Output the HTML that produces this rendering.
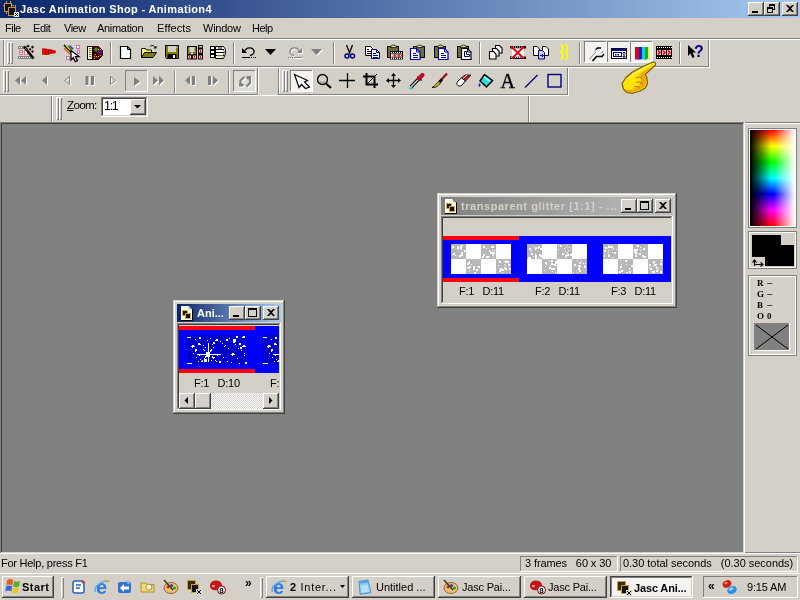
<!DOCTYPE html>
<html lang="en"><head><meta charset="utf-8"><title>Jasc Animation Shop - Animation4</title>
<style>
html,body{margin:0;padding:0}
body{width:800px;height:600px;position:relative;overflow:hidden;background:#d4d0c8;font-family:"Liberation Sans",sans-serif;font-size:11px;color:#000}
div,span,svg{position:absolute;box-sizing:border-box}
svg{overflow:visible;will-change:transform}
.t{white-space:pre;line-height:13px;height:13px;will-change:transform}
.b{font-weight:bold}
.raised{background:#d4d0c8;box-shadow:inset -1px -1px #404040,inset 1px 1px #fff,inset -2px -2px #808080,inset 2px 2px #d4d0c8}
.sunken{box-shadow:inset -1px -1px #fff,inset 1px 1px #808080,inset -2px -2px #d4d0c8,inset 2px 2px #404040}
.tsunk{box-shadow:inset -1px -1px #fff,inset 1px 1px #808080}
.trais{box-shadow:inset -1px -1px #808080,inset 1px 1px #fff}
.ck{background:#f4f3f0}
.chk{background-color:#fff;background-image:linear-gradient(45deg,#d4d0c8 25%,transparent 25%,transparent 75%,#d4d0c8 75%),linear-gradient(45deg,#d4d0c8 25%,transparent 25%,transparent 75%,#d4d0c8 75%);background-size:2px 2px;background-position:0 0,1px 1px}
.etch{box-shadow:inset 0 0 0 1px #808080,inset 0 0 0 2px #fff}
.hl{background:#808080}.wl{background:#fff}
.grip{width:3px;box-shadow:inset 1px 1px #fff,inset -1px -1px #808080}
.sep{width:2px;border-left:1px solid #808080;border-right:1px solid #fff}
</style></head>
<body>
<div style="left:0px;top:0px;width:800px;height:18px;background:linear-gradient(to right,#0a246a,#a6caf0)"></div>
<svg style="left:3px;top:1px" width="16" height="16" viewBox="0 0 16 16" ><rect x="1.500" y="2.500" width="7" height="8" fill="#181008" stroke="#c09848" stroke-width="1"/>
<rect x="5.500" y="6.500" width="7" height="8" fill="#181008" stroke="#c09848" stroke-width="1"/>
<path d="M3.500 0v2M0 4.500h1M7.500 0v2M9 4.500h2M12.500 4v2M3.500 11v2" stroke="#c09848" stroke-width="1" fill="none"/>
<rect x="11" y="11" width="5" height="5" fill="#e8e8e8"/><path d="M12 12l3 3M15 12l-3 3" stroke="#000" stroke-width="1"/></svg>
<span class="t b" style="left:20px;top:3px;letter-spacing:0.35px;color:#fff">Jasc Animation Shop - Animation4</span>
<div class="raised" style="left:748px;top:2px;width:16px;height:14px;"></div>
<div style="left:752px;top:11px;width:6px;height:2px;background:#000"></div>
<div class="raised" style="left:764px;top:2px;width:16px;height:14px;"></div>
<div style="left:769px;top:4px;width:6px;height:6px;border:1px solid #000;border-top:2px solid #000"></div>
<div style="left:767px;top:7px;width:6px;height:6px;border:1px solid #000;border-top:2px solid #000;background:#d4d0c8"></div>
<div class="raised" style="left:782px;top:2px;width:16px;height:14px;"></div>
<svg style="left:786px;top:5px" width="8" height="7" viewBox="0 0 8 7" ><path d="M0 0h2l2 2 2-2h2L5 3.5 8 7H6L4 5 2 7H0l3-3.5z" fill="#000"/></svg>
<span class="t " style="left:5px;top:22px;letter-spacing:-0.5px;">File</span>
<span class="t " style="left:33px;top:22px;letter-spacing:-0.35px;">Edit</span>
<span class="t " style="left:64px;top:22px;letter-spacing:-0.5px;">View</span>
<span class="t " style="left:97px;top:22px;letter-spacing:-0.3px;">Animation</span>
<span class="t " style="left:157px;top:22px;letter-spacing:0.1px;">Effects</span>
<span class="t " style="left:203px;top:22px;letter-spacing:-0.25px;">Window</span>
<span class="t " style="left:252px;top:22px;letter-spacing:-0.5px;">Help</span>
<div class="hl" style="left:0px;top:38px;width:800px;height:1px;"></div>
<div class="wl" style="left:0px;top:39px;width:800px;height:1px;"></div>
<div class="hl" style="left:3px;top:40px;width:1px;height:26px;"></div>
<div class="wl" style="left:4px;top:40px;width:1px;height:26px;"></div>
<div class="hl" style="left:0px;top:66px;width:710px;height:1px;"></div>
<div class="wl" style="left:0px;top:67px;width:710px;height:1px;"></div>
<div class="hl" style="left:708px;top:40px;width:1px;height:27px;"></div>
<div class="wl" style="left:709px;top:40px;width:1px;height:28px;"></div>
<div class="grip" style="left:7px;top:42px;width:3px;height:22px;"></div>
<div class="grip" style="left:10px;top:42px;width:3px;height:22px;"></div>
<svg style="left:18px;top:44px" width="16" height="16" viewBox="0 0 16 16" ><rect x="0" y="2" width="10" height="3" fill="#808080"/><path d="M1 3h1v1h-1zM3 3h1v1h-1zM5 3h1v1h-1zM7 3h1v1h-1zM9 3h1v1h-1z" fill="#fff"/><rect x="0" y="12" width="15" height="3" fill="#808080"/><path d="M1 13h1v1h-1zM3 13h1v1h-1zM5 13h1v1h-1zM7 13h1v1h-1zM9 13h1v1h-1zM11 13h1v1h-1zM13 13h1v1h-1z" fill="#fff"/><rect x="1" y="6" width="4" height="5" fill="#e07888"/><rect x="2" y="7" width="2" height="3" fill="#fff"/><rect x="2.500" y="8" width="1" height="1" fill="#e02"/><rect x="6" y="6" width="4" height="5" fill="#e07888"/><rect x="7" y="7" width="2" height="3" fill="#fff"/><path d="M6 2.500L15.500 14.500" stroke="#000" stroke-width="2.600"/><path d="M7 4l2.500 3" stroke="#e8d040" stroke-width="1" stroke-dasharray="1 1"/><path d="M10 0.500l1.600 1.600L10 3.700 8.400 2.100zM14.500 1.500l1.600 1.600-1.600 1.600-1.600-1.600zM12.200 3.800l1.500 1.500-1.500 1.500-1.500-1.500zM14.500 6l1.500 1.500-1.500 1.500L13 7.500z" fill="#280808"/></svg>
<svg style="left:41px;top:44px" width="16" height="16" viewBox="0 0 16 16" ><path d="M1 4.500l3-.3 3 .8 3 .3 4.500 1.200 .5 1.200-.5 1.500-4 .5-3.500 1.300-3.500 0-2.500-.5z" fill="#e8000c"/><path d="M4.500 5.500v4M7.500 6v4M10.500 6.500v2.500M12.500 7l1 1.500" stroke="#600" stroke-width="1"/></svg>
<svg style="left:64px;top:44px" width="16" height="16" viewBox="0 0 16 16" ><path d="M0 1l8 8" stroke="#000" stroke-width="1.600"/><path d="M0 4l6 6" stroke="#e06000" stroke-width="1.600"/><path d="M2 1.500l6 6" stroke="#f0c000" stroke-width="1.600"/><path d="M4 2l4 4" stroke="#20a040" stroke-width="1.500"/><path d="M5.500 1.500l3.500 3.500" stroke="#2040c0" stroke-width="1.500"/><rect x="12" y="1" width="4" height="4" fill="#d070b0"/><rect x="13" y="2" width="2" height="2" fill="#fff"/><rect x="13" y="6" width="3" height="4" fill="#d070b0"/><rect x="14" y="7" width="1" height="2" fill="#fff"/><rect x="2" y="12" width="4" height="4" fill="#d070b0"/><rect x="3" y="13" width="2" height="2" fill="#fff"/><rect x="8" y="13" width="3" height="3" fill="#d070b0"/><path d="M7 6.500v9.500l2.300-2.300 2 4 2.200-1.100-2-4h3.500z" fill="#fff" stroke="#000" stroke-width="1.300"/></svg>
<svg style="left:87px;top:44px" width="16" height="16" viewBox="0 0 16 16" ><rect x="0.500" y="2.500" width="5" height="13" fill="#ffffe0" stroke="#000"/><path d="M2 4.500h2.500M2 6.500h2.500M2 8.500h2.500M2 10.500h2.500M2 12.500h2.500" stroke="#808000"/><path d="M6 2.500h5.500l4 4v5l-4 4H6z" fill="#800000" stroke="#000"/><circle cx="9" cy="5.500" r="1.800" fill="#20a020"/><circle cx="12.500" cy="8" r="1.800" fill="#2030c0"/><path d="M7 8l6 6" stroke="#000" stroke-width="1.500"/><path d="M11 5h1v1h-1zM13 5h1v1h-1z" fill="#f0a020"/><path d="M7 12h1v1h-1zM9 12h1v1h-1zM11 12h1v1h-1z" fill="#f0a020"/><path d="M8 10h1v1h-1z" fill="#f0a020"/><path d="M13 11h1v1h-1z" fill="#f0a020"/><path d="M7 14h1v1h-1z" fill="#f0a020"/></svg>
<div class="sep" style="left:110px;top:42px;width:2px;height:22px;"></div>
<svg style="left:118px;top:44px" width="16" height="16" viewBox="0 0 16 16" ><path d="M2.500 2.500h7l3 3v9h-10z" fill="#fff" stroke="#000" stroke-width="1.200"/><path d="M9.500 2.500v3h3" fill="none" stroke="#000"/></svg>
<svg style="left:141px;top:44px" width="16" height="16" viewBox="0 0 16 16" ><path d="M0.500 13.500v-9h4l1 1.500h5v3" fill="#ffff80" stroke="#000"/><path d="M0.500 13.500l3-5h12l-3.500 5z" fill="#808000" stroke="#000"/><path d="M9 2.500c1.500-1.500 4-1.500 5 1" fill="none" stroke="#000"/><path d="M12.500 4.500h3v-3z" fill="#000"/></svg>
<svg style="left:164px;top:44px" width="16" height="16" viewBox="0 0 16 16" ><path d="M1.500 1.500h13v13h-12l-1-1z" fill="#808000" stroke="#000"/><rect x="4" y="2" width="8" height="6" fill="#d4d0c8"/><rect x="3.500" y="10" width="9" height="4.500" fill="#000"/><rect x="9" y="11" width="2" height="3" fill="#fff"/><rect x="12.500" y="2.500" width="1" height="1.500" fill="#d4d0c8"/></svg>
<svg style="left:187px;top:44px" width="16" height="16" viewBox="0 0 16 16" ><path d="M0.500 2.500h9v12h-8l-1-1z" fill="#808000" stroke="#000"/><rect x="2.500" y="3" width="5" height="5" fill="#d4d0c8"/><rect x="0" y="10" width="10" height="5.500" fill="#000"/><rect x="11" y="1" width="5" height="14.500" fill="#000"/><rect x="1" y="11.500" width="3" height="3" fill="#fcc"/><path d="M1.500 11.500l1.500 1.500-1.500 1.500" stroke="#e00" fill="none"/><rect x="6" y="11.500" width="3" height="3" fill="#fcc"/><path d="M6.500 11.500l1.500 1.500-1.500 1.500" stroke="#e00" fill="none"/><rect x="12" y="5.500" width="3" height="3" fill="#fcc"/><path d="M12.500 5.500l1.500 1.500-1.500 1.500" stroke="#e00" fill="none"/><rect x="12" y="11.500" width="3" height="3" fill="#fcc"/><path d="M12.500 11.500l1.500 1.500-1.500 1.500" stroke="#e00" fill="none"/><rect x="12" y="2" width="3" height="1.500" fill="#d4d0c8"/><rect x="4" y="8.500" width="2" height="2" fill="#d4d0c8"/></svg>
<svg style="left:210px;top:44px" width="16" height="16" viewBox="0 0 16 16" ><path d="M5.500 2.500h8l2 3v4l-2 5h-8z" fill="#fff" stroke="#000"/><path d="M6 5.500h8M6 8.500h9M6 11.500h8" stroke="#000"/><rect x="7" y="11.500" width="6" height="2" fill="#e8e890"/><rect x="8" y="3.500" width="4" height="1" fill="#000"/><rect x="0.500" y="2.500" width="4" height="3" fill="#fff" stroke="#000"/><rect x="0.500" y="6.500" width="4" height="3" fill="#fff" stroke="#000"/><rect x="0.500" y="10.500" width="4" height="3" fill="#fff" stroke="#000"/><path d="M13 6l2 1.500-2 4" stroke="#808080" fill="none"/></svg>
<div class="sep" style="left:233px;top:42px;width:2px;height:22px;"></div>
<svg style="left:241px;top:44px" width="16" height="16" viewBox="0 0 16 16" ><path d="M3.500 7.500C5 3 12 2.500 13 7c.5 2.500-2 4-4 4.500" fill="none" stroke="#000" stroke-width="1.300"/><path d="M1 4v5h5z" fill="#000"/><path d="M1 13.500h8M10 13.500h1M12 13.500h1M14 13.500h1" stroke="#000"/></svg>
<svg style="left:264px;top:44px" width="16" height="16" viewBox="0 0 16 16" ><path d="M1 5h11l-5.500 6z" fill="#000"/></svg>
<svg style="left:287px;top:44px" width="16" height="16" viewBox="0 0 16 16" ><g transform="translate(1 1)"><path d="M12.500 7.500C11 3 4 2.500 3 7c-.5 2.500 2 4 4 4.500" fill="none" stroke="#fff" stroke-width="1.300"/><path d="M15 4v5h-5z" fill="#fff"/><path d="M7 13.500h8M1 13.500h1M3 13.500h1M5 13.500h1" stroke="#fff"/></g><path d="M12.500 7.500C11 3 4 2.500 3 7c-.5 2.500 2 4 4 4.500" fill="none" stroke="#808080" stroke-width="1.300"/><path d="M15 4v5h-5z" fill="#808080"/><path d="M7 13.500h8M1 13.500h1M3 13.500h1M5 13.500h1" stroke="#808080"/></svg>
<svg style="left:310px;top:44px" width="16" height="16" viewBox="0 0 16 16" ><path d="M2 6h11l-5.500 6z" fill="#fff"/><path d="M1 5h11l-5.500 6z" fill="#808080"/></svg>
<div class="sep" style="left:333px;top:42px;width:2px;height:22px;"></div>
<svg style="left:341px;top:44px" width="16" height="16" viewBox="0 0 16 16" ><path d="M5.500 1l3.500 9M11.500 1l-3.500 9" stroke="#000" stroke-width="1.300" fill="none"/><circle cx="6" cy="12" r="2" fill="none" stroke="#000080" stroke-width="1.400"/><circle cx="11.500" cy="12" r="2" fill="none" stroke="#000080" stroke-width="1.400"/></svg>
<svg style="left:364px;top:44px" width="16" height="16" viewBox="0 0 16 16" ><path d="M1.500 2.500h5l2 2v7h-7z" fill="#fff" stroke="#000"/><path d="M3 5.500h2M3 7.500h4M3 9.500h4" stroke="#000"/><path d="M7.500 5.500h5l3 3v6h-8z" fill="#fff" stroke="#000080"/><path d="M12.500 5.500v3h3" fill="none" stroke="#000080"/><path d="M9 9.500h3M9 11.500h5M9 13.500h5" stroke="#000080"/></svg>
<svg style="left:387px;top:44px" width="16" height="16" viewBox="0 0 16 16" ><rect x="0.5" y="2.500" width="11" height="11" fill="#6e6e3c" stroke="#000"/><path d="M3.5 3.500v-1.500h1.500l.5-1h2l.5 1h1.500v1.500z" fill="#e0e0a0" stroke="#000" stroke-width=".7"/><rect x="3" y="7" width="13" height="8.500" fill="#000"/><path d="M4 8h1v1h-1zM6 8h1v1h-1zM8 8h1v1h-1zM10 8h1v1h-1zM12 8h1v1h-1zM14 8h1v1h-1z" fill="#fff"/><path d="M4 14h1v1h-1zM6 14h1v1h-1zM8 14h1v1h-1zM10 14h1v1h-1zM12 14h1v1h-1zM14 14h1v1h-1z" fill="#fff"/><rect x="4" y="9.500" width="11" height="4" fill="#fdd"/><path d="M5 9.500l2 2-2 2M9 9.500l2 2-2 2M13 9.500l1.500 2-1.500 2" stroke="#e00" fill="none"/><path d="M8 9.500v4M12 9.500v4" stroke="#000"/></svg>
<svg style="left:410px;top:44px" width="16" height="16" viewBox="0 0 16 16" ><rect x="3.5" y="2.500" width="11" height="11" fill="#6e6e3c" stroke="#000"/><path d="M6.5 3.500v-1.500h1.500l.5-1h2l.5 1h1.500v1.500z" fill="#e0e0a0" stroke="#000" stroke-width=".7"/><path d="M0.5 4.5h6l3.500 3.500v7.500h-9.500z" fill="#fff" stroke="#0000a0" stroke-width="1.200"/><path d="M6.5 4.5v3.500h3.500" fill="none" stroke="#0000a0"/><path d="M3 9.5h3M3 11.5h5M3 13.5h5" stroke="#0000a0" stroke-width="1.200"/></svg>
<svg style="left:433px;top:44px" width="16" height="16" viewBox="0 0 16 16" ><rect x="1.5" y="2.500" width="11" height="11" fill="#6e6e3c" stroke="#000"/><path d="M4.5 3.500v-1.500h1.500l.5-1h2l.5 1h1.500v1.500z" fill="#e0e0a0" stroke="#000" stroke-width=".7"/><path d="M5.5 4.5h6l3.500 3.500v7.500h-9.500z" fill="#fff" stroke="#0000a0" stroke-width="1.200"/><path d="M11.5 4.5v3.500h3.500" fill="none" stroke="#0000a0"/><path d="M8 9.5h3M8 11.5h5M8 13.5h5" stroke="#0000a0" stroke-width="1.200"/></svg>
<svg style="left:456px;top:44px" width="16" height="16" viewBox="0 0 16 16" ><rect x="1.5" y="2.500" width="11" height="11" fill="#6e6e3c" stroke="#000"/><path d="M4.5 3.500v-1.500h1.500l.5-1h2l.5 1h1.500v1.500z" fill="#e0e0a0" stroke="#000" stroke-width=".7"/><path d="M5.5 4.5h6l3.500 3.500v7.500h-9.500z" fill="#fff" stroke="#000" stroke-width="1.200"/><path d="M11.5 4.5v3.500h3.500" fill="none" stroke="#000"/><path d="M8.500 7.500v5h5v-2h-3v-3z" fill="#fff" stroke="#000080"/></svg>
<div class="sep" style="left:479px;top:42px;width:2px;height:22px;"></div>
<svg style="left:487px;top:44px" width="16" height="16" viewBox="0 0 16 16" ><path d="M8.5 1.5h4l2.500 2.500v5h-6.500z" fill="#fff" stroke="#000" stroke-width="1.100"/><path d="M5.5 4.5h4l2.500 2.500v5h-6.500z" fill="#fff" stroke="#000" stroke-width="1.100"/><path d="M2.5 7.5h4l2.500 2.500v5h-6.500z" fill="#fff" stroke="#000" stroke-width="1.100"/></svg>
<svg style="left:510px;top:44px" width="16" height="16" viewBox="0 0 16 16" ><rect x="0" y="2" width="16" height="2.500" fill="#000"/><rect x="0" y="12.500" width="16" height="2.500" fill="#000"/><rect x="2" y="4.500" width="12" height="8" fill="#fff"/><path d="M1 2.5h1v1h-1zM3 2.5h1v1h-1zM5 2.5h1v1h-1zM7 2.5h1v1h-1zM9 2.5h1v1h-1zM11 2.5h1v1h-1zM13 2.5h1v1h-1z" fill="#fff"/><path d="M1 13h1v1h-1zM3 13h1v1h-1zM5 13h1v1h-1zM7 13h1v1h-1zM9 13h1v1h-1zM11 13h1v1h-1zM13 13h1v1h-1z" fill="#fff"/><path d="M2 13h1v1h-1zM6 13h1v1h-1zM10 13h1v1h-1zM14 13h1v1h-1z" fill="#22c"/><path d="M1 2.500l13 12M14 2.500L2 14.500" stroke="#e8000c" stroke-width="1.800"/></svg>
<svg style="left:533px;top:44px" width="16" height="16" viewBox="0 0 16 16" ><path d="M0.500 2.500h3.500l2.500 2.500v6.500h-6z" fill="#fff" stroke="#000"/><path d="M9.500 2.500h3.500l2.500 2.500v6.500h-6z" fill="#fff" stroke="#000"/><path d="M5.500 6.500h4l2 2v6.500h-6z" fill="#c8c8ff" stroke="#000080"/><path d="M7 11.500h3M9 10l1.500 1.500L9 13" stroke="#000080" fill="none"/></svg>
<svg style="left:556px;top:44px" width="16" height="16" viewBox="0 0 16 16" ><path d="M5 0.500q4 3.800 0 7.500q4 3.800 0 7.500M9.500 0.500q4 3.800 0 7.500q4 3.800 0 7.500" fill="none" stroke="#ffff00" stroke-width="2"/></svg>
<div class="sep" style="left:579px;top:42px;width:2px;height:22px;"></div>
<div class="tsunk ck" style="left:584px;top:41px;width:23px;height:22px;"></div>
<svg style="left:589px;top:45px" width="16" height="16" viewBox="0 0 16 16" ><path d="M0.500 14l6-6.500c-.5-1.500-.5-3 .5-4" fill="none" stroke="#808080" stroke-width="1"/><path d="M3.500 16l4-4.500h5.500l2-2.500" fill="none" stroke="#000" stroke-width="1.600"/><path d="M7 4.500l1.500-1.500h3.500" fill="none" stroke="#000" stroke-width="1.400"/><path d="M12 8.500l2-2.500" stroke="#808080"/></svg>
<div class="tsunk ck" style="left:607px;top:41px;width:23px;height:22px;"></div>
<svg style="left:612px;top:45px" width="16" height="16" viewBox="0 0 16 16" ><g transform="translate(-1 -1)"><rect x="0.500" y="4.500" width="15" height="10" fill="#fff" stroke="#000"/><rect x="1" y="5" width="14" height="2" fill="#000090"/><rect x="2.500" y="8.500" width="8" height="4" fill="#fff" stroke="#000080"/><rect x="4" y="10" width="1.500" height="1.500" fill="#000080"/><rect x="6.500" y="10" width="1.500" height="1.500" fill="#000080"/><path d="M13 8v5.500M11.500 9.500l1.500-1.500 1.500 1.500M11.500 12l1.500 1.500 1.500-1.500" stroke="#000" fill="none"/></g></svg>
<div class="tsunk ck" style="left:630px;top:41px;width:23px;height:22px;"></div>
<svg style="left:635px;top:45px" width="16" height="16" viewBox="0 0 16 16" ><g transform="translate(-1 -1)"><rect x="1" y="3" width="3.500" height="12.500" fill="#e00010"/><rect x="4" y="3" width="3" height="12.500" fill="#1020d0"/><rect x="7" y="3" width="3" height="12.500" fill="#10d0e0"/><rect x="10" y="3" width="3" height="12.500" fill="#10b030"/><rect x="13" y="3" width="2.500" height="12.500" fill="#f0f020"/><path d="M4 3l1 1-1 1 1 1-1 1 1 1-1 1 1 1-1 1 1 1-1 1 1 1-1 .5" stroke="#e00010" fill="none"/><path d="M7 3l1 1-1 1 1 1-1 1 1 1-1 1 1 1-1 1 1 1-1 1 1 1-1 .5" stroke="#1020d0" fill="none"/><path d="M10 3l1 1-1 1 1 1-1 1 1 1-1 1 1 1-1 1 1 1-1 1 1 1-1 .5" stroke="#10d0e0" fill="none"/><path d="M13 3l1 1-1 1 1 1-1 1 1 1-1 1 1 1-1 1 1 1-1 1 1 1-1 .5" stroke="#10b030" fill="none"/></g></svg>
<svg style="left:657px;top:44px" width="16" height="16" viewBox="0 0 16 16" ><rect x="-1" y="2" width="16" height="13" fill="#000"/><path d="M0 3h1v1h-1zM2 3h1v1h-1zM4 3h1v1h-1zM6 3h1v1h-1zM8 3h1v1h-1zM10 3h1v1h-1zM12 3h1v1h-1zM14 3h1v1h-1z" fill="#fff"/><path d="M0 13h1v1h-1zM2 13h1v1h-1zM4 13h1v1h-1zM6 13h1v1h-1zM8 13h1v1h-1zM10 13h1v1h-1zM12 13h1v1h-1zM14 13h1v1h-1z" fill="#fff"/><rect x="0" y="6" width="4" height="5" fill="#f8b0b8"/><rect x="5" y="6" width="4" height="5" fill="#f8b0b8"/><rect x="10" y="6" width="4" height="5" fill="#f8b0b8"/><path d="M1 6.500l2 2-2 2M6 6.500l2 2-2 2M11 6.500l2 2-2 2" stroke="#e00010" stroke-width="1.300" fill="none"/></svg>
<div class="sep" style="left:679px;top:42px;width:2px;height:22px;"></div>
<svg style="left:688px;top:44px" width="16" height="16" viewBox="0 0 16 16" ><path d="M0 1v11l2.500-2.500 2 4.500 2-1-2-4.500h3.500z" fill="#000"/><text x="6" y="13" font-family="Liberation Sans,sans-serif" font-weight="bold" font-size="16" fill="#000080">?</text></svg>
<div class="hl" style="left:0px;top:94px;width:259px;height:1px;"></div>
<div class="wl" style="left:0px;top:95px;width:278px;height:1px;"></div>
<div class="hl" style="left:257px;top:68px;width:1px;height:26px;"></div>
<div class="wl" style="left:258px;top:68px;width:1px;height:27px;"></div>
<div class="grip" style="left:3px;top:70px;width:3px;height:22px;"></div>
<div class="grip" style="left:6px;top:70px;width:3px;height:22px;"></div>
<svg style="left:14px;top:73px" width="16" height="16" viewBox="0 0 16 16" ><path d="M6 3v9L1 7.500zM12 3v9L7 7.500z" transform="translate(1 1)" fill="#fff"/><path d="M6 3v9L1 7.500zM12 3v9L7 7.500z" fill="#808080"/></svg>
<svg style="left:37px;top:73px" width="16" height="16" viewBox="0 0 16 16" ><path d="M10 3v9L5 7.500z" transform="translate(1 1)" fill="#fff"/><path d="M10 3v9L5 7.500z" fill="#808080"/></svg>
<svg style="left:60px;top:73px" width="16" height="16" viewBox="0 0 16 16" ><path d="M9.500 3.500v8L4.500 7.500z" transform="translate(1 1)" fill="none" stroke="#fff"/><path d="M9.500 3.500v8L4.500 7.500z" fill="none" stroke="#808080"/></svg>
<svg style="left:83px;top:73px" width="16" height="16" viewBox="0 0 16 16" ><path d="M2.500 3h3v9h-3zM8 3h3v9h-3z" transform="translate(1 1)" fill="#fff"/><path d="M2.500 3h3v9h-3zM8 3h3v9h-3z" fill="#808080"/></svg>
<svg style="left:106px;top:73px" width="16" height="16" viewBox="0 0 16 16" ><path d="M4.500 3.500v8l5-4z" transform="translate(1 1)" fill="none" stroke="#fff"/><path d="M4.500 3.500v8l5-4z" fill="none" stroke="#808080"/></svg>
<div class="tsunk" style="left:125px;top:70px;width:23px;height:22px;"></div>
<svg style="left:130px;top:74px" width="16" height="16" viewBox="0 0 16 16" ><path d="M4 3v9l6-4.500z" transform="translate(1 1)" fill="#fff"/><path d="M4 3v9l6-4.500z" fill="#808080"/></svg>
<svg style="left:152px;top:73px" width="16" height="16" viewBox="0 0 16 16" ><path d="M1 3v9l5-4.500zM7 3v9l5-4.500z" transform="translate(1 1)" fill="#fff"/><path d="M1 3v9l5-4.500zM7 3v9l5-4.500z" fill="#808080"/></svg>
<div class="sep" style="left:174px;top:71px;width:2px;height:22px;"></div>
<svg style="left:183px;top:73px" width="16" height="16" viewBox="0 0 16 16" ><path d="M7 3v9L2 7.500zM9 3h3v9h-3z" transform="translate(1 1)" fill="#fff"/><path d="M7 3v9L2 7.500zM9 3h3v9h-3z" fill="#808080"/></svg>
<svg style="left:206px;top:73px" width="16" height="16" viewBox="0 0 16 16" ><path d="M2 3h3v9h-3zM7 3v9l5-4.500z" transform="translate(1 1)" fill="#fff"/><path d="M2 3h3v9h-3zM7 3v9l5-4.500z" fill="#808080"/></svg>
<div class="sep" style="left:228px;top:71px;width:2px;height:22px;"></div>
<div style="left:233px;top:70px;width:23px;height:22px;background:#dedbd5"></div>
<div class="tsunk" style="left:233px;top:70px;width:23px;height:22px;"></div>
<svg style="left:238px;top:74px" width="16" height="16" viewBox="0 0 16 16" ><g transform="translate(1 1)"><path d="M6.500 3L2.500 6.500V10" fill="none" stroke="#fff" stroke-width="2.200"/><path d="M1 9.500h4l1 1.500-1 1.500H1z" fill="#fff"/><path d="M12 5V9L8.500 12.500" fill="none" stroke="#fff" stroke-width="2.200"/><path d="M8.500 2h4.500v3.500H9.500l-1-1.500z" fill="#fff"/></g><path d="M6.500 3L2.500 6.500V10" fill="none" stroke="#808080" stroke-width="2.200"/><path d="M1 9.500h4l1 1.500-1 1.500H1z" fill="#808080"/><path d="M12 5V9L8.500 12.500" fill="none" stroke="#808080" stroke-width="2.200"/><path d="M8.500 2h4.500v3.500H9.500l-1-1.500z" fill="#808080"/></svg>
<div class="hl" style="left:278px;top:68px;width:1px;height:26px;"></div>
<div class="wl" style="left:279px;top:68px;width:1px;height:26px;"></div>
<div class="hl" style="left:278px;top:94px;width:291px;height:1px;"></div>
<div class="wl" style="left:278px;top:95px;width:291px;height:1px;"></div>
<div class="hl" style="left:567px;top:68px;width:1px;height:27px;"></div>
<div class="wl" style="left:568px;top:68px;width:1px;height:28px;"></div>
<div class="grip" style="left:282px;top:70px;width:3px;height:22px;"></div>
<div class="grip" style="left:285px;top:70px;width:3px;height:22px;"></div>
<div class="tsunk ck" style="left:290px;top:70px;width:23px;height:22px;"></div>
<svg style="left:295px;top:74px" width="16" height="16" viewBox="0 0 16 16" ><path d="M-0.500 0.500L12.500 6.500 9.500 8l5 5-4 1.500-4-4-2.500 3z" fill="#fff" stroke="#000" stroke-width="1.200" stroke-linejoin="miter"/></svg>
<svg style="left:317px;top:73px" width="16" height="16" viewBox="0 0 16 16" ><circle cx="5.500" cy="6.500" r="5" fill="none" stroke="#000" stroke-width="1.300"/><path d="M3 8.500a3 3 0 0 0 5 0" fill="none" stroke="#808080"/><path d="M9 10.500l5 4.500" stroke="#000" stroke-width="2.200"/></svg>
<svg style="left:340px;top:73px" width="16" height="16" viewBox="0 0 16 16" ><path d="M-1 7.500h16M7.500 0v15" stroke="#000" stroke-width="1.300"/></svg>
<svg style="left:363px;top:73px" width="16" height="16" viewBox="0 0 16 16" ><path d="M3.500 0v11.500h11.500M0 3.500h11.500v11.500" fill="none" stroke="#000" stroke-width="2"/><path d="M3.500 11.500L14 1" stroke="#000" stroke-width="1"/></svg>
<svg style="left:386px;top:73px" width="16" height="16" viewBox="0 0 16 16" ><path d="M7.500 1v13M1 7.500h13" stroke="#000" stroke-width="1.300"/><path d="M7.500 0l2.500 3h-5zM7.500 15l2.500-3h-5zM0 7.500l3-2.500v5zM15 7.500l-3-2.500v5z" fill="#000"/></svg>
<svg style="left:409px;top:73px" width="16" height="16" viewBox="0 0 16 16" ><path d="M2 14l8-8.500" stroke="#000" stroke-width="3.400"/><path d="M2 14l8-8.500" stroke="#b0e8e8" stroke-width="1.400"/><path d="M8.500 3.500l4 4" stroke="#000" stroke-width="1.600"/><path d="M10 5.500l3.500-3.500" stroke="#c00020" stroke-width="4" stroke-linecap="round"/><path d="M0 15.500h4" stroke="#20d0d0" stroke-width="1.500"/></svg>
<svg style="left:432px;top:73px" width="16" height="16" viewBox="0 0 16 16" ><path d="M9 7l6-6.500" stroke="#901010" stroke-width="2.200"/><path d="M7.500 9l2.500-2.500" stroke="#000" stroke-width="3"/><path d="M0 14.500c3 .5 6-1 8.500-4.500l-1.500-1.500c-2 1-3 4-7 6z" fill="#d0d020" stroke="#000" stroke-width=".9"/></svg>
<svg style="left:455px;top:73px" width="16" height="16" viewBox="0 0 16 16" ><path d="M6.500 5l3.500-3h6l-5.500 6z" fill="#d01010" stroke="#000" stroke-width=".8"/><path d="M8 5.500l4-3.500" stroke="#fff" stroke-width="1"/><path d="M6.500 5l4 3-3.500 4c-1.500 1.500-4 1.500-5-.5-.5-1.500 0-2.500 1-3.500z" fill="#fff" stroke="#000" stroke-width="1"/></svg>
<svg style="left:478px;top:73px" width="16" height="16" viewBox="0 0 16 16" ><path d="M6.500 1.500l8 6-6 6.500-6.500-6z" fill="#30d8d8" stroke="#000" stroke-width="1.500"/><path d="M6 4l6 4.500" stroke="#a0ffff" stroke-width="1.500"/><path d="M1.500 10.500c-1 1.500-1 3 0 3s1-1.500 0-3z" fill="#0030d0" stroke="#0030d0" stroke-width=".6"/></svg>
<svg style="left:501px;top:73px" width="16" height="16" viewBox="0 0 16 16" ><text x="-0.500" y="14.700" font-family="Liberation Serif,serif" font-size="20" fill="#000" stroke="#000" stroke-width=".35">A</text></svg>
<svg style="left:524px;top:73px" width="16" height="16" viewBox="0 0 16 16" ><path d="M1 14.500L13.500 2" stroke="#000080" stroke-width="1.300"/></svg>
<svg style="left:547px;top:73px" width="16" height="16" viewBox="0 0 16 16" ><rect x="1" y="1.500" width="13" height="12.500" fill="none" stroke="#000080" stroke-width="1.400"/></svg>
<div class="hl" style="left:51px;top:96px;width:1px;height:26px;"></div>
<div class="wl" style="left:52px;top:96px;width:1px;height:26px;"></div>
<div class="grip" style="left:56px;top:97px;width:3px;height:23px;"></div>
<div class="grip" style="left:59px;top:97px;width:3px;height:23px;"></div>
<span class="t " style="left:67px;top:98px;letter-spacing:-0.75px;font-size:11.700px"><u>Z</u>oom:</span>
<div class="sunken" style="left:101px;top:97px;width:47px;height:20px;background:#fff"></div>
<span class="t " style="left:104px;top:100px;letter-spacing:-1.3px;font-size:12.500px">1:1</span>
<div class="raised" style="left:130px;top:99px;width:16px;height:16px;"></div>
<svg style="left:134px;top:105px" width="7" height="4" viewBox="0 0 7 4" ><path d="M0 0h7L3.500 3.500z" fill="#000"/></svg>
<div class="hl" style="left:528px;top:96px;width:1px;height:26px;"></div>
<div class="wl" style="left:529px;top:96px;width:1px;height:26px;"></div>
<div class="sunken" style="left:0px;top:122px;width:745px;height:432px;background:#808080"></div>
<div class="raised" style="left:437px;top:193px;width:240px;height:115px;box-shadow:inset -1px -1px #404040,inset 1px 1px #d4d0c8,inset -2px -2px #808080,inset 2px 2px #fff"></div>
<div style="left:441px;top:197px;width:232px;height:18px;background:linear-gradient(to right,#808080,#c0c0c0)"></div>
<svg style="left:443px;top:198px" width="16" height="16" viewBox="0 0 16 16" ><path d="M2 1h8l3 3v11H2z" fill="#fffff0"/><path d="M10 1l3.500 3.500V15.500H2" fill="none" stroke="#000" stroke-width="1"/><path d="M10 1v3h3" fill="#d4d0c8" stroke="#808080" stroke-width=".6"/><rect x="3.500" y="5.500" width="5" height="5" fill="#181008" stroke="#d8a838" stroke-width="1"/><rect x="6.500" y="8.500" width="5" height="5" fill="#181008" stroke="#d8a838" stroke-width="1"/></svg>
<span class="t b" style="left:461px;top:200px;letter-spacing:0.55px;color:#d4d0c8">transparent glitter [1:1] - ...</span>
<div class="raised" style="left:655px;top:199px;width:16px;height:14px;"></div>
<svg style="left:659px;top:202px" width="8" height="7" viewBox="0 0 8 7" ><path d="M0 0h2l2 2 2-2h2L5 3.5 8 7H6L4 5 2 7H0l3-3.5z" fill="#000"/></svg>
<div class="raised" style="left:637px;top:199px;width:16px;height:14px;"></div>
<div style="left:640px;top:201px;width:9px;height:9px;border:1px solid #000;border-top:2px solid #000"></div>
<div class="raised" style="left:621px;top:199px;width:16px;height:14px;"></div>
<div style="left:625px;top:208px;width:6px;height:2px;background:#000"></div>
<div class="sunken" style="left:441px;top:216px;width:232px;height:88px;background:#d4d0c8"></div>
<div style="left:443px;top:236px;width:228px;height:46px;background:#0000fe"></div>
<div style="left:443px;top:236px;width:76px;height:4px;background:#fa0010"></div>
<div style="left:443px;top:278px;width:76px;height:4px;background:#fa0010"></div>
<svg style="left:451px;top:244px" width="60" height="30" viewBox="0 0 60 30" ><rect width="60" height="30" fill="#fff"/><rect x="0" y="0" width="15" height="15" fill="#b8b8b8"/><path d="M6 3h2v2h-2zM11 1h1v1h-1zM9 2h2v2h-2zM10 1h1v1h-1zM1 2h2v2h-2zM7 2h1v1h-1zM2 9h2v2h-2zM1 10h1v1h-1zM4 11h1v1h-1zM10 10h2v2h-2zM1 4h1v1h-1zM9 3h2v2h-2zM7 3h1v1h-1zM10 5h1v1h-1zM2 10h1v1h-1zM6 2h1v1h-1zM10 1h1v1h-1zM8 11h2v2h-2zM13 6h2v2h-2zM10 8h2v2h-2z" fill="#fff"/><rect x="30" y="0" width="15" height="15" fill="#b8b8b8"/><path d="M35 4h1v1h-1zM42 13h1v1h-1zM32 10h2v2h-2zM39 8h2v2h-2zM42 8h2v2h-2zM40 2h1v1h-1zM39 7h1v1h-1zM43 6h1v1h-1zM38 7h1v1h-1zM41 2h2v2h-2zM36 12h2v2h-2zM40 8h2v2h-2zM32 2h2v2h-2zM38 12h1v1h-1zM31 12h2v2h-2zM41 10h2v2h-2zM35 12h2v2h-2zM41 6h1v1h-1zM38 6h1v1h-1zM40 2h2v2h-2z" fill="#fff"/><rect x="15" y="15" width="15" height="15" fill="#b8b8b8"/><path d="M16 19h2v2h-2zM18 27h1v1h-1zM22 22h2v2h-2zM17 18h2v2h-2zM22 24h2v2h-2zM18 22h2v2h-2zM27 22h2v2h-2zM26 22h1v1h-1zM18 17h1v1h-1zM18 19h1v1h-1zM16 23h1v1h-1zM20 20h1v1h-1zM18 22h2v2h-2zM25 25h2v2h-2zM18 27h1v1h-1zM23 28h2v2h-2zM22 22h2v2h-2zM17 23h2v2h-2zM16 19h1v1h-1zM19 23h1v1h-1z" fill="#fff"/><rect x="45" y="15" width="15" height="15" fill="#b8b8b8"/><path d="M47 21h1v1h-1zM47 16h1v1h-1zM54 17h2v2h-2zM55 16h1v1h-1zM49 25h2v2h-2zM48 26h2v2h-2zM51 25h2v2h-2zM53 17h1v1h-1zM53 23h2v2h-2zM53 20h1v1h-1zM48 17h2v2h-2zM57 20h2v2h-2zM57 18h1v1h-1zM49 24h2v2h-2zM48 27h1v1h-1zM58 24h2v2h-2zM56 17h2v2h-2zM54 21h1v1h-1zM51 28h1v1h-1zM54 24h2v2h-2z" fill="#fff"/></svg>
<span class="t " style="left:459px;top:285px;letter-spacing:-0.25px;">F:1   D:11</span>
<svg style="left:527px;top:244px" width="60" height="30" viewBox="0 0 60 30" ><rect width="60" height="30" fill="#fff"/><rect x="0" y="0" width="15" height="15" fill="#b8b8b8"/><path d="M11 4h1v1h-1zM13 4h2v2h-2zM12 13h1v1h-1zM4 9h2v2h-2zM6 12h1v1h-1zM1 13h2v2h-2zM8 5h1v1h-1zM12 10h2v2h-2zM8 13h2v2h-2zM6 2h1v1h-1zM2 4h2v2h-2zM4 6h1v1h-1zM8 10h1v1h-1zM8 11h2v2h-2zM13 11h1v1h-1zM11 2h2v2h-2zM13 12h1v1h-1zM8 3h2v2h-2zM13 11h2v2h-2zM2 13h2v2h-2z" fill="#fff"/><rect x="30" y="0" width="15" height="15" fill="#b8b8b8"/><path d="M38 7h1v1h-1zM42 3h1v1h-1zM33 1h1v1h-1zM40 8h1v1h-1zM40 10h2v2h-2zM41 6h1v1h-1zM39 9h1v1h-1zM31 1h1v1h-1zM39 12h1v1h-1zM37 4h1v1h-1zM31 5h1v1h-1zM35 9h1v1h-1zM43 10h2v2h-2zM35 9h2v2h-2zM33 1h2v2h-2zM38 11h2v2h-2zM39 3h1v1h-1zM39 9h1v1h-1zM38 13h1v1h-1zM40 1h1v1h-1z" fill="#fff"/><rect x="15" y="15" width="15" height="15" fill="#b8b8b8"/><path d="M18 18h2v2h-2zM25 27h1v1h-1zM24 16h2v2h-2zM26 24h2v2h-2zM28 28h1v1h-1zM24 16h1v1h-1zM19 20h1v1h-1zM28 17h2v2h-2zM24 16h1v1h-1zM23 21h1v1h-1zM27 20h2v2h-2zM24 24h2v2h-2zM24 19h2v2h-2zM24 19h2v2h-2zM18 22h1v1h-1zM22 23h2v2h-2zM17 26h1v1h-1zM22 17h1v1h-1zM26 20h1v1h-1zM28 18h2v2h-2z" fill="#fff"/><rect x="45" y="15" width="15" height="15" fill="#b8b8b8"/><path d="M48 20h1v1h-1zM53 19h1v1h-1zM52 23h1v1h-1zM56 19h1v1h-1zM57 22h2v2h-2zM51 22h1v1h-1zM51 21h1v1h-1zM57 21h1v1h-1zM51 24h2v2h-2zM53 27h1v1h-1zM52 21h2v2h-2zM54 17h1v1h-1zM58 19h1v1h-1zM47 20h2v2h-2zM46 28h1v1h-1zM50 28h1v1h-1zM52 26h2v2h-2zM52 18h2v2h-2zM57 21h1v1h-1zM50 16h1v1h-1z" fill="#fff"/></svg>
<span class="t " style="left:535px;top:285px;letter-spacing:-0.25px;">F:2   D:11</span>
<svg style="left:603px;top:244px" width="60" height="30" viewBox="0 0 60 30" ><rect width="60" height="30" fill="#fff"/><rect x="0" y="0" width="15" height="15" fill="#b8b8b8"/><path d="M7 2h2v2h-2zM1 11h1v1h-1zM13 5h1v1h-1zM10 4h1v1h-1zM5 2h2v2h-2zM1 6h2v2h-2zM5 10h1v1h-1zM1 9h1v1h-1zM2 3h2v2h-2zM1 3h1v1h-1zM5 11h2v2h-2zM9 13h1v1h-1zM5 8h1v1h-1zM5 6h1v1h-1zM5 1h1v1h-1zM1 12h1v1h-1zM9 8h1v1h-1zM8 2h2v2h-2zM11 8h2v2h-2zM9 5h1v1h-1z" fill="#fff"/><rect x="30" y="0" width="15" height="15" fill="#b8b8b8"/><path d="M34 6h1v1h-1zM42 12h1v1h-1zM37 6h1v1h-1zM33 1h1v1h-1zM41 12h2v2h-2zM37 3h1v1h-1zM32 11h2v2h-2zM39 11h2v2h-2zM40 4h2v2h-2zM31 8h1v1h-1zM33 5h2v2h-2zM31 5h2v2h-2zM36 9h2v2h-2zM34 1h2v2h-2zM34 6h1v1h-1zM31 6h2v2h-2zM32 8h2v2h-2zM39 11h1v1h-1zM34 9h1v1h-1zM32 5h1v1h-1z" fill="#fff"/><rect x="15" y="15" width="15" height="15" fill="#b8b8b8"/><path d="M18 22h1v1h-1zM22 16h2v2h-2zM20 26h1v1h-1zM17 25h1v1h-1zM26 27h2v2h-2zM28 21h2v2h-2zM18 20h1v1h-1zM16 27h2v2h-2zM27 27h1v1h-1zM24 28h1v1h-1zM26 25h1v1h-1zM17 16h1v1h-1zM18 26h2v2h-2zM17 22h2v2h-2zM24 16h1v1h-1zM26 24h1v1h-1zM23 20h1v1h-1zM23 28h1v1h-1zM27 24h1v1h-1zM26 24h1v1h-1z" fill="#fff"/><rect x="45" y="15" width="15" height="15" fill="#b8b8b8"/><path d="M57 27h2v2h-2zM50 28h1v1h-1zM50 19h1v1h-1zM49 27h2v2h-2zM53 22h1v1h-1zM53 26h2v2h-2zM58 16h1v1h-1zM47 25h1v1h-1zM51 20h2v2h-2zM55 25h1v1h-1zM46 23h1v1h-1zM53 20h1v1h-1zM57 19h2v2h-2zM50 27h2v2h-2zM53 23h2v2h-2zM58 17h1v1h-1zM50 17h2v2h-2zM46 20h2v2h-2zM47 24h2v2h-2zM50 22h1v1h-1z" fill="#fff"/></svg>
<span class="t " style="left:611px;top:285px;letter-spacing:-0.25px;">F:3   D:11</span>
<div class="raised" style="left:173px;top:300px;width:112px;height:114px;box-shadow:inset -1px -1px #404040,inset 1px 1px #d4d0c8,inset -2px -2px #808080,inset 2px 2px #fff"></div>
<div style="left:177px;top:304px;width:104px;height:18px;background:linear-gradient(to right,#0a246a,#a6caf0)"></div>
<svg style="left:179px;top:305px" width="16" height="16" viewBox="0 0 16 16" ><path d="M2 1h8l3 3v11H2z" fill="#fffff0"/><path d="M10 1l3.500 3.500V15.500H2" fill="none" stroke="#000" stroke-width="1"/><path d="M10 1v3h3" fill="#d4d0c8" stroke="#808080" stroke-width=".6"/><rect x="3.500" y="5.500" width="5" height="5" fill="#181008" stroke="#d8a838" stroke-width="1"/><rect x="6.500" y="8.500" width="5" height="5" fill="#181008" stroke="#d8a838" stroke-width="1"/></svg>
<span class="t b" style="left:197px;top:307px;letter-spacing:0px;color:#fff">Ani...</span>
<div class="raised" style="left:263px;top:306px;width:16px;height:14px;"></div>
<svg style="left:267px;top:309px" width="8" height="7" viewBox="0 0 8 7" ><path d="M0 0h2l2 2 2-2h2L5 3.5 8 7H6L4 5 2 7H0l3-3.5z" fill="#000"/></svg>
<div class="raised" style="left:245px;top:306px;width:16px;height:14px;"></div>
<div style="left:248px;top:308px;width:9px;height:9px;border:1px solid #000;border-top:2px solid #000"></div>
<div class="raised" style="left:229px;top:306px;width:16px;height:14px;"></div>
<div style="left:233px;top:315px;width:6px;height:2px;background:#000"></div>
<div class="sunken" style="left:177px;top:323px;width:104px;height:87px;background:#d4d0c8"></div>
<div style="left:179px;top:326px;width:100px;height:47px;background:#0000fe;overflow:hidden"></div>
<div style="left:179px;top:326px;width:76px;height:4px;background:#fa0010"></div>
<div style="left:179px;top:369px;width:76px;height:4px;background:#fa0010"></div>
<svg style="left:187px;top:335px;overflow:hidden" width="60" height="30" viewBox="0 0 60 30" overflow="hidden" shape-rendering="crispEdges"><rect width="60" height="30" fill="#0000cc"/><path d="M0 2.500h4M0 28.500h5M55 2.500h2" stroke="#fff" stroke-width="1"/><path d="M10 19.500h24M21.500 8v19" stroke="#fff" stroke-width="1"/><path d="M14.500 27L27 12M22 18l8 9M16 14l5 5" stroke="#fff" stroke-width="1" stroke-dasharray="3 1.500"/><rect x="19" y="17" width="4" height="5" fill="#fff"/><rect x="17" y="24" width="3" height="3" fill="#fff"/><path d="M5 10h2v2h-2zM4 11h1v1h-1zM7 11h1v1h-1zM5 12h1v1h-1zM11 8h2v2h-2zM13 9h1v1h-1zM8 14h2v2h-2zM8 16h1v1h-1zM29 4h2v2h-2zM28 5h1v1h-1zM37 11h1v1h-1zM38 10h1v1h-1zM46 4h3v3h-3zM46 6h2v2h-2zM45 18h2v2h-2zM44 19h1v1h-1zM47 19h1v1h-1zM45 20h1v1h-1zM56 10h2v2h-2zM55 11h1v1h-1zM58 11h1v1h-1zM52 8h2v2h-2zM53 12h2v2h-2zM51 13h1v1h-1zM57 18h1v1h-1zM57 20h1v1h-1zM50 23h1v1h-1zM58 27h2v2h-2zM52 28h1v1h-1zM49 1h2v2h-2zM56 1h2v2h-2zM39 4h2v2h-2zM42 3h1v1h-1zM12 2h2v2h-2zM8 4h1v1h-1zM26 7h2v2h-2zM25 9h1v1h-1zM32 26h2v2h-2zM9 22h1v1h-1zM11 26h1v1h-1zM13 24h1v1h-1zM24 25h1v1h-1zM27 22h1v1h-1zM30 20h1v1h-1zM16 10h1v1h-1zM18 12h1v1h-1zM33 6h1v1h-1zM35 8h1v1h-1zM41 13h1v1h-1zM54 15h1v1h-1zM48 9h1v1h-1zM20 5h1v1h-1zM23 3h1v1h-1zM6 18h1v1h-1zM12 20h1v1h-1zM36 22h1v1h-1zM40 26h1v1h-1zM44 27h1v1h-1z" fill="#fff"/></svg>
<svg style="left:263px;top:335px;overflow:hidden" width="16" height="30" viewBox="0 0 16 30" overflow="hidden" shape-rendering="crispEdges"><rect width="60" height="30" fill="#0000cc"/><path d="M0 2.500h4M0 28.500h5M55 2.500h2" stroke="#fff" stroke-width="1"/><path d="M10 19.500h24M21.500 8v19" stroke="#fff" stroke-width="1"/><path d="M14.500 27L27 12M22 18l8 9M16 14l5 5" stroke="#fff" stroke-width="1" stroke-dasharray="3 1.500"/><rect x="19" y="17" width="4" height="5" fill="#fff"/><rect x="17" y="24" width="3" height="3" fill="#fff"/><path d="M5 10h2v2h-2zM4 11h1v1h-1zM7 11h1v1h-1zM5 12h1v1h-1zM11 8h2v2h-2zM13 9h1v1h-1zM8 14h2v2h-2zM8 16h1v1h-1zM29 4h2v2h-2zM28 5h1v1h-1zM37 11h1v1h-1zM38 10h1v1h-1zM46 4h3v3h-3zM46 6h2v2h-2zM45 18h2v2h-2zM44 19h1v1h-1zM47 19h1v1h-1zM45 20h1v1h-1zM56 10h2v2h-2zM55 11h1v1h-1zM58 11h1v1h-1zM52 8h2v2h-2zM53 12h2v2h-2zM51 13h1v1h-1zM57 18h1v1h-1zM57 20h1v1h-1zM50 23h1v1h-1zM58 27h2v2h-2zM52 28h1v1h-1zM49 1h2v2h-2zM56 1h2v2h-2zM39 4h2v2h-2zM42 3h1v1h-1zM12 2h2v2h-2zM8 4h1v1h-1zM26 7h2v2h-2zM25 9h1v1h-1zM32 26h2v2h-2zM9 22h1v1h-1zM11 26h1v1h-1zM13 24h1v1h-1zM24 25h1v1h-1zM27 22h1v1h-1zM30 20h1v1h-1zM16 10h1v1h-1zM18 12h1v1h-1zM33 6h1v1h-1zM35 8h1v1h-1zM41 13h1v1h-1zM54 15h1v1h-1zM48 9h1v1h-1zM20 5h1v1h-1zM23 3h1v1h-1zM6 18h1v1h-1zM12 20h1v1h-1zM36 22h1v1h-1zM40 26h1v1h-1zM44 27h1v1h-1z" fill="#fff"/></svg>
<span class="t " style="left:194px;top:377px;letter-spacing:-0.25px;">F:1   D:10</span>
<span class="t " style="left:270px;top:377px;letter-spacing:-0.25px;">F:</span>
<div class="chk" style="left:179px;top:393px;width:100px;height:16px;"></div>
<div class="raised" style="left:179px;top:393px;width:16px;height:16px;"></div>
<svg style="left:184px;top:397px" width="4" height="7" viewBox="0 0 4 7" ><path d="M4 0v7L0.500 3.500z" fill="#000"/></svg>
<div class="raised" style="left:263px;top:393px;width:16px;height:16px;"></div>
<svg style="left:269px;top:397px" width="4" height="7" viewBox="0 0 4 7" ><path d="M0 0v7l3.500-3.500z" fill="#000"/></svg>
<div class="raised" style="left:195px;top:393px;width:16px;height:16px;"></div>
<div class="hl" style="left:745px;top:122px;width:55px;height:1px;"></div>
<div class="wl" style="left:745px;top:123px;width:55px;height:1px;"></div>
<div class="hl" style="left:745px;top:552px;width:55px;height:1px;"></div>
<div class="etch" style="left:748px;top:128px;width:49px;height:100px;"></div>
<div style="left:750px;top:130px;width:45px;height:96px;background:linear-gradient(to right,rgba(0,0,0,1) 0%,rgba(0,0,0,0) 47%,rgba(255,255,255,0) 53%,rgba(255,255,255,1) 100%),linear-gradient(to bottom,#f00 0%,#ff0 16.7%,#0f0 33.3%,#0ff 50%,#00f 66.7%,#f0f 83.3%,#f00 100%)"></div>
<div class="etch" style="left:748px;top:231px;width:49px;height:38px;"></div>
<div style="left:765px;top:245px;width:29px;height:21px;background:#000"></div>
<div style="left:752px;top:235px;width:29px;height:22px;background:#000"></div>
<svg style="left:752px;top:258px" width="13" height="9" viewBox="0 0 13 9" ><path d="M2.5 8V2.5M0.5 4.5l2-2.5 2 2.5M2.5 6.5h8M8.5 4.5l2.5 2-2.5 2" fill="none" stroke="#000" stroke-width="1.2"/></svg>
<div class="etch" style="left:748px;top:275px;width:49px;height:81px;"></div>
<span class="t b" style="left:757px;top:278px;letter-spacing:0px;font-family:'Liberation Serif',serif;font-size:9px;line-height:11px;height:11px">R</span>
<span class="t b" style="left:767px;top:278px;letter-spacing:0px;font-family:'Liberation Serif',serif;font-size:9px;line-height:11px;height:11px;letter-spacing:-0.5px">--</span>
<span class="t b" style="left:757px;top:289px;letter-spacing:0px;font-family:'Liberation Serif',serif;font-size:9px;line-height:11px;height:11px">G</span>
<span class="t b" style="left:767px;top:289px;letter-spacing:0px;font-family:'Liberation Serif',serif;font-size:9px;line-height:11px;height:11px;letter-spacing:-0.5px">--</span>
<span class="t b" style="left:757px;top:300px;letter-spacing:0px;font-family:'Liberation Serif',serif;font-size:9px;line-height:11px;height:11px">B</span>
<span class="t b" style="left:767px;top:300px;letter-spacing:0px;font-family:'Liberation Serif',serif;font-size:9px;line-height:11px;height:11px;letter-spacing:-0.5px">--</span>
<span class="t b" style="left:757px;top:311px;letter-spacing:0px;font-family:'Liberation Serif',serif;font-size:9px;line-height:11px;height:11px">O</span>
<span class="t b" style="left:767px;top:311px;letter-spacing:0px;font-family:'Liberation Serif',serif;font-size:9px;line-height:11px;height:11px;letter-spacing:-0.5px">0</span>
<div class="tsunk" style="left:754px;top:323px;width:36px;height:28px;background:#808080"></div>
<svg style="left:755px;top:324px" width="34" height="26" viewBox="0 0 34 26" ><path d="M1 1L33 25M33 1L1 25" stroke="#000" stroke-width="1" fill="none"/></svg>
<div class="wl" style="left:0px;top:553px;width:800px;height:1px;"></div>
<span class="t " style="left:1px;top:557px;letter-spacing:-0.25px;">For Help, press F1</span>
<div class="tsunk" style="left:520px;top:556px;width:98px;height:16px;"></div>
<span class="t " style="left:525px;top:557px;letter-spacing:-0.1px;">3 frames   60 x 30</span>
<div class="tsunk" style="left:620px;top:556px;width:178px;height:16px;"></div>
<span class="t " style="left:623px;top:557px;letter-spacing:-0.03px;">0.30 total seconds   (0.30 seconds)</span>
<div class="wl" style="left:0px;top:573px;width:800px;height:1px;"></div>
<div class="raised" style="left:2px;top:576px;width:52px;height:22px;"></div>
<svg style="left:4px;top:578px" width="16" height="16" viewBox="0 0 16 16" ><g transform="skewX(-9) translate(2 0)"><path d="M1.500 2q3-1.800 6 0v5.500q-3-1.800-6 0z" fill="#e0602a"/><path d="M8.500 2.800q3 1.800 6 0v5.500q-3 1.800-6 0z" fill="#5cb028"/><path d="M1.500 8.500q3-1.800 6 0v5q-3-1.800-6 0z" fill="#3c64d8"/><path d="M8.500 9.300q3 1.800 6 0v5q-3 1.800-6 0z" fill="#ecc818"/></g></svg>
<span class="t b" style="left:22px;top:581px;letter-spacing:0.45px;">Start</span>
<div class="grip" style="left:61px;top:577px;width:3px;height:21px;"></div>
<svg style="left:71px;top:579px" width="16" height="16" viewBox="0 0 16 16" ><rect x="2" y="2" width="11" height="12" rx="2" fill="#fff" stroke="#2060c0" stroke-width="1.500"/><path d="M5 6h5M5 9h4" stroke="#2060c0" stroke-width="1.500"/><path d="M10 3l4-1-1 4z" fill="#e04020"/></svg>
<svg style="left:94px;top:579px" width="16" height="16" viewBox="0 0 16 16" ><text x="2" y="14.500" font-family="Liberation Sans,sans-serif" font-weight="bold" font-size="20" fill="#2b7fe0">e</text><path d="M1.500 13C-1 8 8 0.500 14.500 2.500" fill="none" stroke="#5aa8f0" stroke-width="1.400"/><path d="M11 1.500c2-.5 4 0 4.500 1.500" fill="none" stroke="#e8b020" stroke-width="1.200"/></svg>
<svg style="left:117px;top:579px" width="16" height="16" viewBox="0 0 16 16" ><rect x="1" y="3" width="13" height="11" rx="2" fill="#3070d0"/><path d="M3 9l4-4v2.500h5v3H7V13z" fill="#fff"/><path d="M9 1l5 2-3 3z" fill="#80b0f0"/></svg>
<svg style="left:140px;top:579px" width="16" height="16" viewBox="0 0 16 16" ><path d="M1 4h5l1.500 1.500H14V13H1z" fill="#f0d878" stroke="#a08020" stroke-width=".8"/><circle cx="9" cy="8" r="3" fill="#fff" fill-opacity=".7" stroke="#a08020" stroke-width=".8"/></svg>
<svg style="left:163px;top:579px" width="16" height="16" viewBox="0 0 16 16" ><ellipse cx="8" cy="9" rx="7" ry="5.500" fill="#e8c070" stroke="#805020" stroke-width=".8"/><circle cx="5" cy="8" r="1.500" fill="#d02020"/><circle cx="8.500" cy="6.500" r="1.500" fill="#2040d0"/><circle cx="11.500" cy="9" r="1.500" fill="#20a040"/><path d="M1 1l9 10" stroke="#503010" stroke-width="1.500"/></svg>
<svg style="left:186px;top:579px" width="16" height="16" viewBox="0 0 16 16" ><rect x="1.500" y="1.500" width="8" height="9" fill="#3a2a10" stroke="#c8a040"/><rect x="5.500" y="5.500" width="7" height="8" fill="#1a1208" stroke="#c8a040"/><rect x="10" y="10" width="6" height="6" fill="#d8d8d8"/><path d="M11 11l4 4m0-4l-4 4" stroke="#000"/></svg>
<svg style="left:209px;top:579px" width="18" height="16" viewBox="0 0 18 16" ><path d="M1 7a6 5 0 0 1 12-1c1 3-1 5-5 5-4 1-7-1-7-4z" fill="#c01818"/><circle cx="12.500" cy="11" r="4" fill="#fff" stroke="#800"/><text x="10.300" y="14.200" font-family="Liberation Sans,sans-serif" font-size="8" font-weight="bold" fill="#000">8</text><path d="M3 7h3" stroke="#fff"/></svg>
<span class="t b" style="left:245px;top:577px;letter-spacing:0px;font-size:12px">»</span>
<div class="grip" style="left:260px;top:577px;width:3px;height:21px;"></div>
<div class="raised" style="left:266px;top:576px;width:83px;height:22px;"></div>
<span class="t " style="left:290px;top:581px;letter-spacing:0.7px;"><b>2</b> Inter...</span>
<svg style="left:271px;top:579px" width="16" height="16" viewBox="0 0 16 16" ><text x="2" y="14.500" font-family="Liberation Sans,sans-serif" font-weight="bold" font-size="20" fill="#2b7fe0">e</text><path d="M1.500 13C-1 8 8 0.500 14.500 2.500" fill="none" stroke="#5aa8f0" stroke-width="1.400"/><path d="M11 1.500c2-.5 4 0 4.500 1.500" fill="none" stroke="#e8b020" stroke-width="1.200"/></svg>
<svg style="left:340px;top:585px" width="5" height="3" viewBox="0 0 5 3" ><path d="M0 0h5L2.5 3z" fill="#000"/></svg>
<div class="raised" style="left:352px;top:576px;width:83px;height:22px;"></div>
<span class="t " style="left:376px;top:581px;letter-spacing:0px;">Untitled ...</span>
<svg style="left:357px;top:579px" width="16" height="16" viewBox="0 0 16 16" ><g transform="rotate(-9 8 8)"><path d="M3 1.500h9l1 13H2z" fill="#8cc8f4" stroke="#4088c0" stroke-width=".8"/><path d="M3 1.500h9l.2 2.500H2.800z" fill="#58a0dc"/><path d="M4 6l7 0 .5 7-8 0z" fill="#b8e0fc"/></g></svg>
<div class="raised" style="left:438px;top:576px;width:83px;height:22px;"></div>
<span class="t " style="left:462px;top:581px;letter-spacing:-0.2px;">Jasc Pai...</span>
<svg style="left:443px;top:579px" width="16" height="16" viewBox="0 0 16 16" ><ellipse cx="8" cy="9" rx="7" ry="5.500" fill="#e8c070" stroke="#805020" stroke-width=".8"/><circle cx="5" cy="8" r="1.500" fill="#d02020"/><circle cx="8.500" cy="6.500" r="1.500" fill="#2040d0"/><circle cx="11.500" cy="9" r="1.500" fill="#20a040"/><path d="M1 1l9 10" stroke="#503010" stroke-width="1.500"/></svg>
<div class="raised" style="left:524px;top:576px;width:83px;height:22px;"></div>
<span class="t " style="left:548px;top:581px;letter-spacing:-0.2px;">Jasc Pai...</span>
<svg style="left:529px;top:579px" width="18" height="16" viewBox="0 0 18 16" ><path d="M1 7a6 5 0 0 1 12-1c1 3-1 5-5 5-4 1-7-1-7-4z" fill="#c01818"/><circle cx="12.500" cy="11" r="4" fill="#fff" stroke="#800"/><text x="10.300" y="14.200" font-family="Liberation Sans,sans-serif" font-size="8" font-weight="bold" fill="#000">8</text><path d="M3 7h3" stroke="#fff"/></svg>
<div class="ck" style="left:610px;top:576px;width:83px;height:22px;box-shadow:inset -1px -1px #fff,inset 1px 1px #404040,inset -2px -2px #d4d0c8,inset 2px 2px #808080"></div>
<span class="t b" style="left:634px;top:582px;letter-spacing:-0.15px;">Jasc Ani...</span>
<svg style="left:616px;top:580px" width="16" height="16" viewBox="0 0 16 16" ><rect x="1.500" y="1.500" width="8" height="9" fill="#3a2a10" stroke="#c8a040"/><rect x="5.500" y="5.500" width="7" height="8" fill="#1a1208" stroke="#c8a040"/><rect x="10" y="10" width="6" height="6" fill="#d8d8d8"/><path d="M11 11l4 4m0-4l-4 4" stroke="#000"/></svg>
<div class="tsunk" style="left:703px;top:576px;width:95px;height:22px;"></div>
<span class="t b" style="left:708px;top:580px;letter-spacing:0px;font-size:12px">«</span>
<svg style="left:721px;top:579px" width="18" height="17" viewBox="0 0 18 17" ><ellipse cx="6" cy="5" rx="4.5" ry="3.5" fill="#d02010" transform="rotate(-25 6 5)"/><ellipse cx="11" cy="11" rx="5" ry="3.8" fill="#3090e0" transform="rotate(-25 11 11)"/><ellipse cx="10" cy="10" rx="2.500" ry="1.500" fill="#a0d0ff" transform="rotate(-25 10 10)"/><ellipse cx="5" cy="4" rx="2" ry="1" fill="#ff8070" transform="rotate(-25 5 4)"/></svg>
<span class="t " style="left:747px;top:581px;letter-spacing:-0.15px;">9:15 AM</span>
<svg style="left:0;top:0;pointer-events:none" width="800" height="600" viewBox="0 0 800 600">
<path d="M653.500 61.800L642 67l-9.500 5-6.500 5.500-4 6 1.500 5.500 3.500 3.500 5.500 .8 7.500-2.300 5.300-3 2.200-4.500-.7-6-1.800-3 10-9q2-2.500-1.500-3.700z" fill="#ffe400" stroke="#7a5800" stroke-width="1.200" stroke-linejoin="round"/>
<path d="M654 64.500l-10 9 1.500 3 .8 6-2.300 4.500-5 3-7.500 2.300-5-.8-3-3c3 2 6 2 9 .5 4-1 7-3.500 8-6.500 1-3 .5-6-1.500-8z" fill="#e89a00" opacity=".75"/>
<path d="M636 78c2.500-1.500 5-1 6.500 1M636.500 82.500c2.500-1 5-.5 6 1.500M634 87c2-1 4.500-.5 5.500 1" fill="none" stroke="#a86800" stroke-width="1"/>
<path d="M651 64l-9 5.500-8 4.500-5 4.500" fill="none" stroke="#fff8a0" stroke-width="1.300" opacity=".8"/>
</svg>
</body></html>
